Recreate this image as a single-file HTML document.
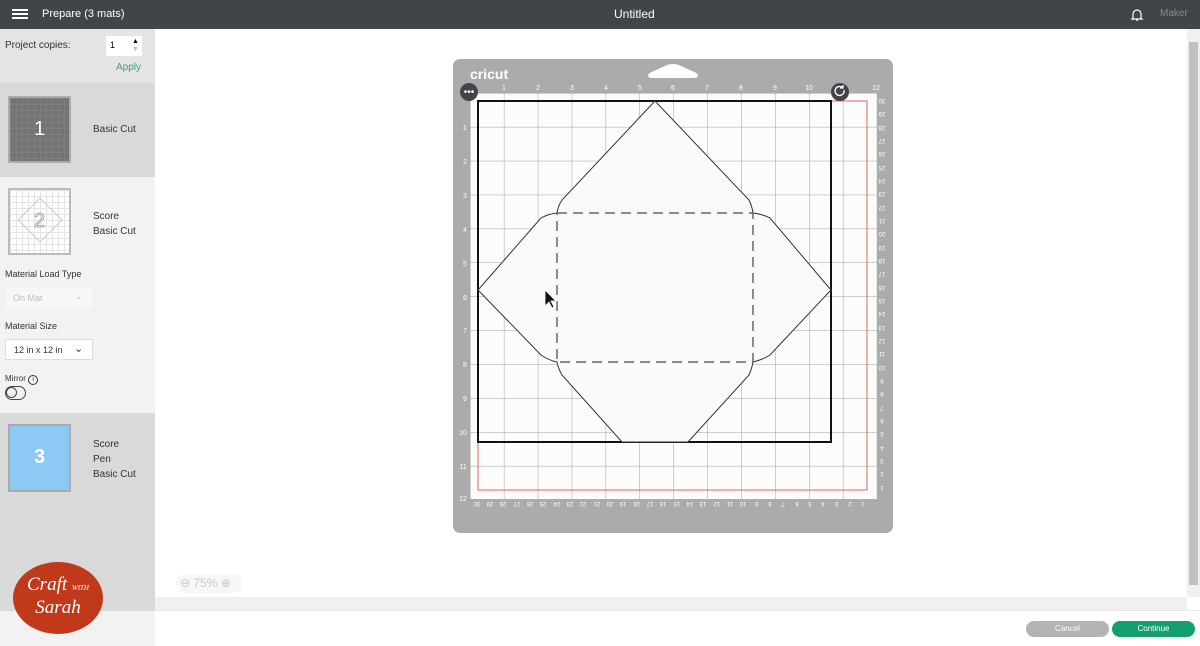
<!DOCTYPE html>
<html><head><style>
*{margin:0;padding:0;box-sizing:border-box}
body{width:1200px;height:646px;position:relative;overflow:hidden;font-family:"Liberation Sans",sans-serif;background:#fff}
.top{position:absolute;left:0;top:0;width:1200px;height:29px;background:#414549;color:#fff;font-size:11px}
.abs{position:absolute}
.side{position:absolute;left:0;top:29px;width:155px;height:617px;background:#f2f2f2}
.lbl{font-size:9px;color:#333}
</style></head><body>
<div class="top">
 <div class="abs" style="left:12px;top:9px;width:16px;height:2px;background:#fff;box-shadow:0 4px 0 #fff,0 8px 0 #fff"></div>
 <div class="abs" style="left:42px;top:8px;font-size:11px">Prepare (3 mats)</div>
 <div class="abs" style="left:614px;top:7px;font-size:12px">Untitled</div>
 <svg class="abs" style="left:1130px;top:8px" width="14" height="14" viewBox="0 0 14 14"><path d="M3 10V6a4 4 0 0 1 8 0v4l1 1H2z M6 12h2" fill="none" stroke="#fff" stroke-width="1.2"/></svg>
 <div class="abs" style="left:1160px;top:8px;color:#888;font-size:10px">Maker</div>
</div>
<div class="side">
 <div class="abs" style="left:0;top:0;width:155px;height:54px;background:#e4e4e4"></div>
 <div class="abs" style="left:5px;top:11px;font-size:10px;color:#333">Project copies:</div>
 <div class="abs" style="left:106px;top:7px;width:36px;height:20px;background:#fff;font-size:9px;padding:4px 0 0 4px">1<span style="position:absolute;left:26px;top:2px;font-size:7px;line-height:8px">▲<br><span style="color:#bbb">▼</span></span></div>
 <div class="abs" style="left:116px;top:33px;font-size:10px;color:#3aa56e">Apply</div>
 <div class="abs" style="left:0;top:54px;width:155px;height:94px;background:#d9d9d9"></div>
 <div class="abs" style="left:8px;top:67px;width:63px;height:67px;background:#747474;border:2px solid #aaa"><div style="position:absolute;inset:0;background-image:linear-gradient(#7e7e7e 1px,transparent 1px),linear-gradient(90deg,#7e7e7e 1px,transparent 1px);background-size:6px 6px"></div><div style="position:absolute;left:0;top:0;width:100%;text-align:center;top:20px;color:#fff;font-size:20px">1</div></div>
 <div class="abs" style="left:93px;top:95px;font-size:10px;color:#333">Basic Cut</div>
 <div class="abs" style="left:8px;top:159px;width:63px;height:67px;background:#fff;border:2px solid #bbb"><div style="position:absolute;inset:0;background-image:linear-gradient(#e4e4e4 1px,transparent 1px),linear-gradient(90deg,#e4e4e4 1px,transparent 1px);background-size:6px 6px"></div><div style="position:absolute;left:14px;top:14px;width:32px;height:32px;border:1px solid #ccc;transform:rotate(45deg)"></div><div style="position:absolute;width:100%;text-align:center;top:20px;color:#fff;font-size:20px;-webkit-text-stroke:1px #aaa">2</div></div>
 <div class="abs" style="left:93px;top:180px;font-size:10px;color:#333;line-height:15px">Score<br>Basic Cut</div>
 <div class="abs lbl" style="left:5px;top:240px">Material Load Type</div>
 <div class="abs" style="left:5px;top:259px;width:87px;height:20px;background:#f7f7f7;font-size:9px;color:#bbb;padding:5px 0 0 8px">On Mat<span style="position:absolute;left:70px;top:3px">⌄</span></div>
 <div class="abs lbl" style="left:5px;top:292px">Material Size</div>
 <div class="abs" style="left:5px;top:310px;width:88px;height:21px;background:#fff;border:1px solid #ddd;font-size:9px;color:#333;padding:5px 0 0 8px">12 in x 12 in<span style="position:absolute;left:68px;top:2px;font-size:11px">⌄</span></div>
 <div class="abs lbl" style="left:5px;top:345px;font-size:8px">Mirror <span style="display:inline-block;width:10px;height:10px;border:1px solid #333;border-radius:50%;font-size:7px;text-align:center;line-height:8px">i</span></div>
 <div class="abs" style="left:5px;top:357px;width:21px;height:14px;border:1.3px solid #444;border-radius:7px"><div style="position:absolute;left:0;top:0;width:11px;height:11px;border:1.3px solid #444;border-radius:50%"></div></div>
 <div class="abs" style="left:0;top:384px;width:155px;height:198px;background:#d9d9d9"></div>
 <div class="abs" style="left:8px;top:395px;width:63px;height:68px;background:#8cc9f5;border:2px solid #aaa"><div style="position:absolute;width:100%;text-align:center;top:20px;color:#fff;font-size:20px;font-weight:bold">3</div></div>
 <div class="abs" style="left:93px;top:408px;font-size:10px;color:#333;line-height:15px">Score<br>Pen<br>Basic Cut</div>
 <div class="abs" style="left:13px;top:533px;width:90px;height:72px;border-radius:50%;background:#c0391b;color:#fff;font-family:'Liberation Serif',serif;font-style:italic;text-align:center;font-size:19px;line-height:20px;padding-top:13px">Craft <span style="font-size:7px">WITH</span><br>Sarah</div>
</div>
<div class="abs" style="left:1187px;top:29px;width:13px;height:568px;background:#f0f0f0"></div>
<div class="abs" style="left:1189px;top:42px;width:9px;height:543px;background:#c1c1c1"></div>
<div class="abs" style="left:155px;top:597px;width:1032px;height:13px;background:#f0f0f0"></div>
<div class="abs" style="left:155px;top:610px;width:1045px;height:36px;background:#fff;border-top:1px solid #e8e8e8"></div>
<div class="abs" style="left:176px;top:574px;width:66px;height:19px;background:#f7f7f7;border-radius:10px;color:#c8c8c8;font-size:12px;padding:2px 0 0 4px">⊖ 75% ⊕</div>
<div class="abs" style="left:1026px;top:621px;width:83px;height:16px;border-radius:8px;background:#b3b3b3;color:#fff;font-size:8px;text-align:center;line-height:16px">Cancel</div>
<div class="abs" style="left:1112px;top:621px;width:83px;height:16px;border-radius:8px;background:#14a06e;color:#fff;font-size:8px;text-align:center;line-height:16px">Continue</div>
<svg class="abs" style="left:0;top:0" width="1200" height="646" font-family="Liberation Sans" >
<defs>
<pattern id="g" x="470" y="93" width="33.9" height="33.9" patternUnits="userSpaceOnUse"><path d="M0 0V33.9M0 0H33.9" stroke="#a0a0a0" stroke-width="1" fill="none"/></pattern>
</defs>
<rect x="453" y="59" width="440" height="474" rx="7" fill="#ababab"/>
<path d="M648 75 Q650 72 654 71 L667 65 Q673 63 679 65 L692 71 Q696 72 698 75 Q698 78 694 78 H652 Q648 78 648 75Z" fill="#fff"/>
<text x="470" y="79" fill="#fff" font-size="14" font-weight="bold">cricut</text>
<rect x="470" y="93" width="407" height="406" fill="#fcfcfc"/>
<rect x="470" y="93" width="407" height="406" fill="url(#g)"/>
<rect x="478" y="101" width="389" height="389" fill="none" stroke="#e2665a" stroke-width="1"/>
<rect x="478" y="101" width="353" height="341" fill="none" stroke="#111" stroke-width="2"/>
<path d="M655 101 L562 200 Q558 206 557 213 Q548 214 541 218 L478 290 L541 355 Q548 360 557 362 Q558 368 562 375 L622 442 H688 L749 375 Q752 368 753 362 Q762 360 770 355 L831 290 L770 218 Q762 214 753 213 Q752 206 749 200 Z" fill="#fafafa" stroke="#333" stroke-width="1"/>
<rect x="557" y="213" width="196" height="149" fill="none" stroke="#666" stroke-width="1.5" stroke-dasharray="10 6"/>
<circle cx="469" cy="92" r="9" fill="#414549"/><text x="469" y="95" fill="#fff" font-size="10" text-anchor="middle">•••</text>
<circle cx="840" cy="92" r="9" fill="#414549"/><path d="M844 90a4.5 4.5 0 1 1-1.5-2.5" fill="none" stroke="#fff" stroke-width="1.3"/><path d="M843 85v3h-3" fill="none" stroke="#fff" stroke-width="1.3"/>
<path d="M545 290 v16 l4-4 3 6 2-1-3-6 5 0z" fill="#111" stroke="#fff" stroke-width="0.8"/>
<g fill="#fff" font-size="7" text-anchor="middle">
<text x="504" y="90">1</text><text x="538" y="90">2</text><text x="572" y="90">3</text><text x="606" y="90">4</text><text x="640" y="90">5</text><text x="673" y="90">6</text><text x="707" y="90">7</text><text x="741" y="90">8</text><text x="775" y="90">9</text><text x="809" y="90">10</text><text x="876" y="90">12</text>
<text x="465" y="130">1</text><text x="465" y="164">2</text><text x="465" y="198">3</text><text x="465" y="232">4</text><text x="465" y="266">5</text><text x="465" y="300">6</text><text x="465" y="333">7</text><text x="465" y="367">8</text><text x="465" y="401">9</text><text x="463" y="435">10</text><text x="463" y="469">11</text><text x="463" y="501">12</text>
</g>
<g fill="#fff" font-size="6" text-anchor="middle">
<text transform="translate(882,99) rotate(180)">30</text><text transform="translate(882,112) rotate(180)">29</text><text transform="translate(882,126) rotate(180)">28</text><text transform="translate(882,139) rotate(180)">27</text><text transform="translate(882,152) rotate(180)">26</text><text transform="translate(882,166) rotate(180)">25</text><text transform="translate(882,179) rotate(180)">24</text><text transform="translate(882,192) rotate(180)">23</text><text transform="translate(882,206) rotate(180)">22</text><text transform="translate(882,219) rotate(180)">21</text><text transform="translate(882,232) rotate(180)">20</text><text transform="translate(882,246) rotate(180)">19</text><text transform="translate(882,259) rotate(180)">18</text><text transform="translate(882,272) rotate(180)">17</text><text transform="translate(882,286) rotate(180)">16</text><text transform="translate(882,299) rotate(180)">15</text><text transform="translate(882,312) rotate(180)">14</text><text transform="translate(882,326) rotate(180)">13</text><text transform="translate(882,339) rotate(180)">12</text><text transform="translate(882,352) rotate(180)">11</text><text transform="translate(882,366) rotate(180)">10</text><text transform="translate(882,379) rotate(180)">9</text><text transform="translate(882,392) rotate(180)">8</text><text transform="translate(882,406) rotate(180)">7</text><text transform="translate(882,419) rotate(180)">6</text><text transform="translate(882,432) rotate(180)">5</text><text transform="translate(882,446) rotate(180)">4</text><text transform="translate(882,459) rotate(180)">3</text><text transform="translate(882,472) rotate(180)">2</text><text transform="translate(882,486) rotate(180)">1</text>
<text transform="translate(477,502) rotate(180)">30</text><text transform="translate(490,502) rotate(180)">29</text><text transform="translate(503,502) rotate(180)">28</text><text transform="translate(517,502) rotate(180)">27</text><text transform="translate(530,502) rotate(180)">26</text><text transform="translate(543,502) rotate(180)">25</text><text transform="translate(557,502) rotate(180)">24</text><text transform="translate(570,502) rotate(180)">23</text><text transform="translate(583,502) rotate(180)">22</text><text transform="translate(597,502) rotate(180)">21</text><text transform="translate(610,502) rotate(180)">20</text><text transform="translate(623,502) rotate(180)">19</text><text transform="translate(637,502) rotate(180)">18</text><text transform="translate(650,502) rotate(180)">17</text><text transform="translate(663,502) rotate(180)">16</text><text transform="translate(677,502) rotate(180)">15</text><text transform="translate(690,502) rotate(180)">14</text><text transform="translate(703,502) rotate(180)">13</text><text transform="translate(717,502) rotate(180)">12</text><text transform="translate(730,502) rotate(180)">11</text><text transform="translate(743,502) rotate(180)">10</text><text transform="translate(757,502) rotate(180)">9</text><text transform="translate(770,502) rotate(180)">8</text><text transform="translate(783,502) rotate(180)">7</text><text transform="translate(797,502) rotate(180)">6</text><text transform="translate(810,502) rotate(180)">5</text><text transform="translate(823,502) rotate(180)">4</text><text transform="translate(837,502) rotate(180)">3</text><text transform="translate(850,502) rotate(180)">2</text><text transform="translate(863,502) rotate(180)">1</text>
</g>
</svg>
</body></html>
